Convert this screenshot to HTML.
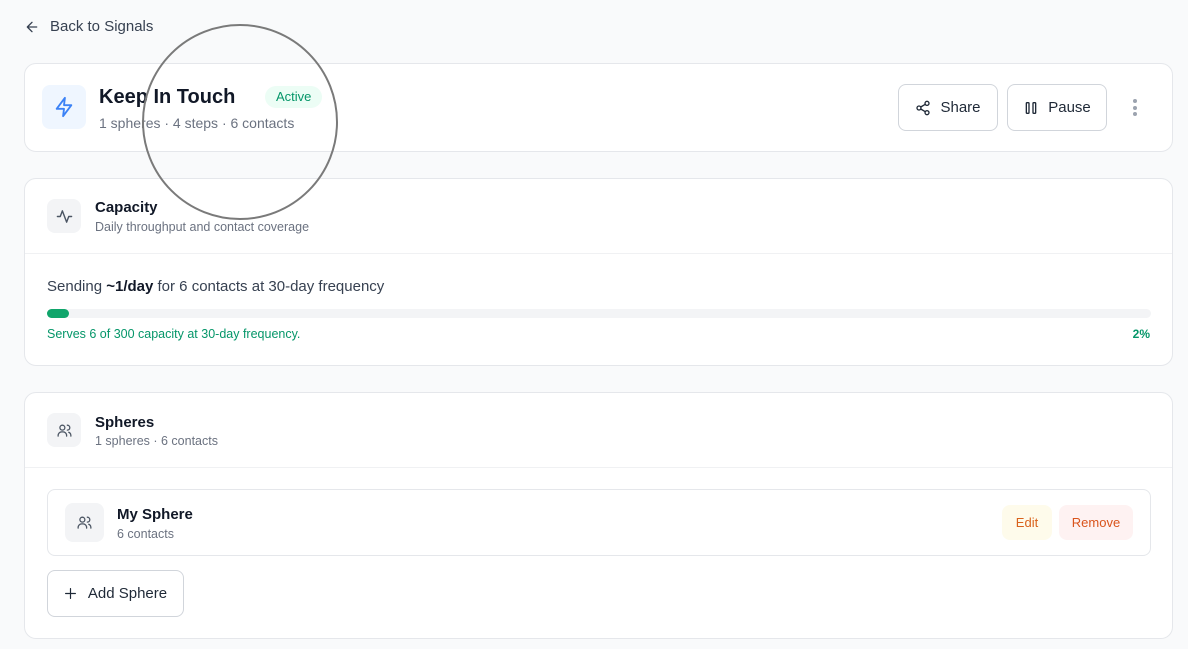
<!DOCTYPE html>
<html><head><meta charset="utf-8"><style>
*{box-sizing:border-box;margin:0;padding:0}
body{width:1188px;height:649px;background:#f9fafb;font-family:"Liberation Sans",sans-serif;color:#111827;position:relative;overflow:hidden}
.a{position:absolute}
.card{position:absolute;background:#fff;border:1px solid #e5e7eb;border-radius:12px}
.ib{position:absolute;width:34px;height:34px;border-radius:8px;background:#f3f4f6;display:flex;align-items:center;justify-content:center}
.t{font-size:15px;font-weight:bold;color:#111827}
.s{font-size:12.5px;color:#6b7280}
.btn{position:absolute;border:1px solid #d1d5db;border-radius:8px;background:#fff;display:flex;align-items:center;justify-content:center;gap:9px;font-size:15px;color:#1f2937}
svg{fill:none;stroke-linecap:round;stroke-linejoin:round}
</style></head><body>
<div class="a" style="left:24px;top:18px;font-size:15px;color:#374151;display:flex;align-items:center;gap:10px">
<svg width="16" height="16" viewBox="0 0 24 24" stroke="#374151" stroke-width="2"><path d="M19 12H5M12 19l-7-7 7-7"/></svg>Back to Signals</div>

<div class="card" style="left:24px;top:63px;width:1149px;height:89px">
 <div class="a" style="left:17px;top:21px;width:44px;height:44px;border-radius:8px;background:#eff6ff;display:flex;align-items:center;justify-content:center">
 <svg width="22" height="22" viewBox="0 0 24 24" stroke="#3b82f6" stroke-width="2"><path d="M13 2L4 14h8l-1 8 9-12h-8l1-8z"/></svg></div>
 <div class="a" style="left:74px;top:22px;font-size:20px;font-weight:bold;color:#111827">Keep In Touch</div>
 <div class="a" style="left:240px;top:22px;height:22px;padding:0 11px;border-radius:11px;background:#ecfdf5;color:#059669;font-size:13px;line-height:22px">Active</div>
 <div class="a" style="left:74px;top:51px;font-size:14px;color:#6b7280">1 spheres · 4 steps · 6 contacts</div>
 <div class="btn" style="left:873px;top:20px;width:100px;height:47px">
 <svg width="16" height="16" viewBox="0 0 24 24" stroke="#1f2937" stroke-width="2"><circle cx="18" cy="5" r="3"/><circle cx="6" cy="12" r="3"/><circle cx="18" cy="19" r="3"/><path d="M8.6 13.5l6.8 4M15.4 6.5l-6.8 4"/></svg>Share</div>
 <div class="btn" style="left:982px;top:20px;width:100px;height:47px">
 <svg width="16" height="16" viewBox="0 0 24 24" stroke="#1f2937" stroke-width="2"><rect x="5" y="4" width="4" height="16" rx="1"/><rect x="15" y="4" width="4" height="16" rx="1"/></svg>Pause</div>
 <div class="a" style="left:1108px;top:35px;width:4px">
 <div style="width:4px;height:4px;border-radius:2px;background:#9ca3af;margin-bottom:2.5px"></div><div style="width:4px;height:4px;border-radius:2px;background:#9ca3af;margin-bottom:2.5px"></div><div style="width:4px;height:4px;border-radius:2px;background:#9ca3af"></div></div>
</div>

<div class="card" style="left:24px;top:178px;width:1149px;height:188px">
 <div class="ib" style="left:22px;top:20px"><svg width="17" height="17" viewBox="0 0 24 24" stroke="#4b5563" stroke-width="2"><path d="M22 12h-4l-3 8L9 4l-3 8H2"/></svg></div>
 <div class="a t" style="left:70px;top:20px">Capacity</div>
 <div class="a s" style="left:70px;top:41px">Daily throughput and contact coverage</div>
 <div class="a" style="left:0;top:74px;width:100%;border-top:1px solid #f0f1f3"></div>
 <div class="a" style="left:22px;top:99px;font-size:15px;color:#374151">Sending <b style="color:#111827">~1/day</b> for 6 contacts at 30-day frequency</div>
 <div class="a" style="left:22px;top:130px;width:1104px;height:9px;border-radius:5px;background:#f3f4f6"><div style="width:22px;height:9px;border-radius:5px;background:#10a56b"></div></div>
 <div class="a" style="left:22px;top:148px;font-size:12.5px;color:#059669">Serves 6 of 300 capacity at 30-day frequency.</div>
 <div class="a" style="right:22px;top:148px;font-size:12px;font-weight:bold;color:#059669">2%</div>
</div>

<div class="card" style="left:24px;top:392px;width:1149px;height:247px">
 <div class="ib" style="left:22px;top:20px"><svg width="17" height="17" viewBox="0 0 24 24" stroke="#4b5563" stroke-width="1.8"><circle cx="9" cy="8" r="3.5"/><path d="M3 20v-1a5 5 0 015-5h2a5 5 0 015 5v1M16 4.5a3.5 3.5 0 010 7M21 20v-1a5 5 0 00-3-4.5"/></svg></div>
 <div class="a t" style="left:70px;top:21px">Spheres</div>
 <div class="a s" style="left:70px;top:41px">1 spheres · 6 contacts</div>
 <div class="a" style="left:0;top:74px;width:100%;border-top:1px solid #f0f1f3"></div>
 <div class="a" style="left:22px;top:96px;width:1104px;height:67px;border:1px solid #e5e7eb;border-radius:8px">
  <div class="a" style="left:17px;top:13px;width:39px;height:39px;border-radius:8px;background:#f3f4f6;display:flex;align-items:center;justify-content:center"><svg width="17" height="17" viewBox="0 0 24 24" stroke="#4b5563" stroke-width="1.8"><circle cx="9" cy="8" r="3.5"/><path d="M3 20v-1a5 5 0 015-5h2a5 5 0 015 5v1M16 4.5a3.5 3.5 0 010 7M21 20v-1a5 5 0 00-3-4.5"/></svg></div>
  <div class="a t" style="left:69px;top:16px;font-size:15px">My Sphere</div>
  <div class="a s" style="left:69px;top:37px">6 contacts</div>
  <div class="a" style="left:954px;top:15px;width:50px;height:35px;border-radius:8px;background:#fefbeb;color:#d9621c;font-size:13px;line-height:35px;text-align:center">Edit</div>
  <div class="a" style="left:1011px;top:15px;width:74px;height:35px;border-radius:8px;background:#fef2f2;color:#d9541c;font-size:13px;line-height:35px;text-align:center">Remove</div>
 </div>
 <div class="btn" style="left:22px;top:177px;width:137px;height:47px;gap:11px"><svg width="13" height="13" viewBox="0 0 24 24" stroke="#1f2937" stroke-width="2.2"><path d="M12 3v18M3 12h18"/></svg>Add Sphere</div>
</div>

<div class="a" style="left:142px;top:24px;width:196px;height:196px;border-radius:50%;border:2px solid #7a7a7a"></div>
</body></html>
